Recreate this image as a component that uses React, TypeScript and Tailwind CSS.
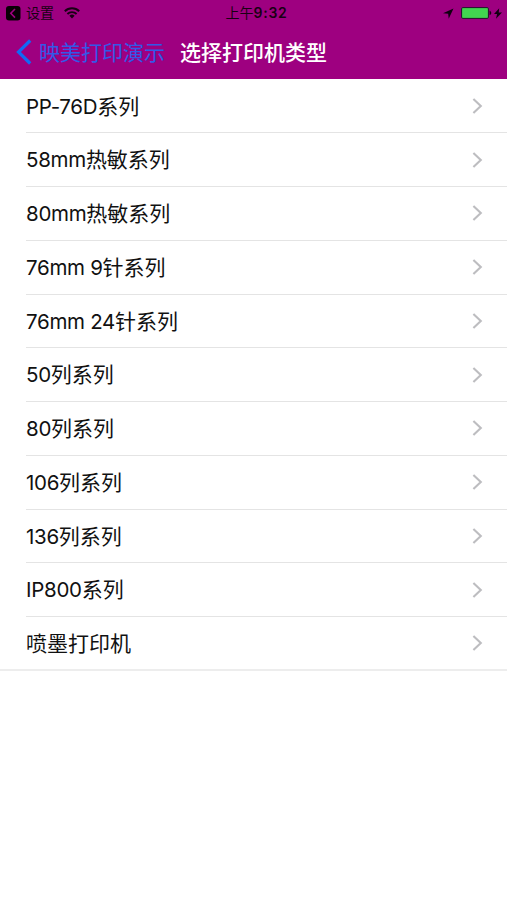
const rows: { latin: string; han: string }[] = [
  { latin: 'PP-76D', han: '系列' },
  { latin: '58mm', han: '热敏系列' },
  { latin: '80mm', han: '热敏系列' },
  { latin: '76mm 9', han: '针系列' },
  { latin: '76mm 24', han: '针系列' },
  { latin: '50', han: '列系列' },
  { latin: '80', han: '列系列' },
  { latin: '106', han: '列系列' },
  { latin: '136', han: '列系列' },
  { latin: 'IP800', han: '系列' },
  { latin: '', han: '喷墨打印机' },
];

function StatusBar() {
  return (
    <div className="grid h-[26px] grid-cols-3 items-center text-[14px] leading-none text-[#180013]">
      <div className="flex items-center pl-[6px]">
        <svg className="h-[15px] w-[15px]" viewBox="0 0 15 15">
          <rect width="14.5" height="14.5" rx="3" fill="#080006" />
          <path d="M9 3 4.8 7.3 9 11.6" fill="none" stroke="#a00080" strokeWidth="1.6" />
        </svg>
        <span className="ml-[5px]">设置</span>
        <svg className="ml-[10px] h-[12px] w-[16px]" viewBox="0 0 16 12" fill="none" stroke="#180013">
          <path d="M.8 4.2a10.2 10.2 0 0 1 14.4 0" strokeWidth="2" />
          <path d="M3.4 7a6.5 6.5 0 0 1 9.2 0" strokeWidth="1.9" />
          <path d="m8 11.5-2.6-2.7a3.7 3.7 0 0 1 5.2 0Z" fill="#180013" stroke="none" />
        </svg>
      </div>
      <div className="whitespace-nowrap pl-[6px] text-center">
        上午<span className="font-semibold tracking-[0.7px]">9:32</span>
      </div>
      <div className="flex items-center justify-end pr-[5px]">
        <svg className="h-[11px] w-[11px]" viewBox="0 0 11 11">
          <path d="M10.5.5 0 5.2l5.2.5.5 5Z" fill="#100010" />
        </svg>
        <svg className="ml-[7px] h-[12px] w-[31px]" viewBox="0 0 31 12">
          <rect x=".6" y=".6" width="26.8" height="10.8" rx="1.2" fill="#42d650" stroke="#24102a" />
          <path d="M28.6 3.8c2.2.7 2.2 3.7 0 4.4Z" fill="#180013" />
        </svg>
        <svg className="ml-[2px] h-[11px] w-[8px]" viewBox="0 0 8 11">
          <path d="M5.2.2 0 6.1h3.1L2 10.8l6-6.4H4.7Z" fill="#100010" />
        </svg>
      </div>
    </div>
  );
}

export default function App() {
  return (
    <div className="h-[900px] w-[507px] overflow-hidden bg-white font-['Inter','Noto_Sans_CJK_SC',sans-serif] text-black" lang="zh-CN">
      <header className="h-[79px] bg-[#9e0080]">
        <StatusBar />
        <div className="flex h-[52px] items-center text-[21px] leading-none">
          <svg className="ml-[16px] h-[26px] w-[16px]" viewBox="0 0 16 26">
            <path d="M14.2 1.5 2.5 13l11.7 11.5" fill="none" stroke="#1269f5" strokeWidth="3.2" />
          </svg>
          <span className="ml-[7px] text-[#3359e8]">映美打印演示</span>
          <h1 className="ml-[15px] font-medium text-white">选择打印机类型</h1>
        </div>
      </header>
      <ul className="border-b-2 border-[#ededed] pt-[0.6px]">
        {rows.map((row, i) => (
          <li
            key={row.latin + row.han}
            className={'flex pl-[26px] ' + (i < rows.length - 1 ? 'h-[53.75px]' : 'h-[52.4px]')}
          >
            <div
              className={
                'flex flex-1 items-center justify-between pr-[24px] ' +
                (i < rows.length - 1 ? 'border-b border-[#e4e4e4]' : '')
              }
            >
              <span className="whitespace-pre pt-px text-[21px] leading-none text-[#111]">
                <span className="text-[20.5px] tracking-[-0.3px]">{row.latin}</span>
                {row.han}
              </span>
              <svg className="h-[16px] w-[11px]" viewBox="0 0 11 16">
                <path d="m1.4 1 7.4 7-7.4 7" fill="none" stroke="#bdbdc0" strokeWidth="2.1" />
              </svg>
            </div>
          </li>
        ))}
      </ul>
    </div>
  );
}
